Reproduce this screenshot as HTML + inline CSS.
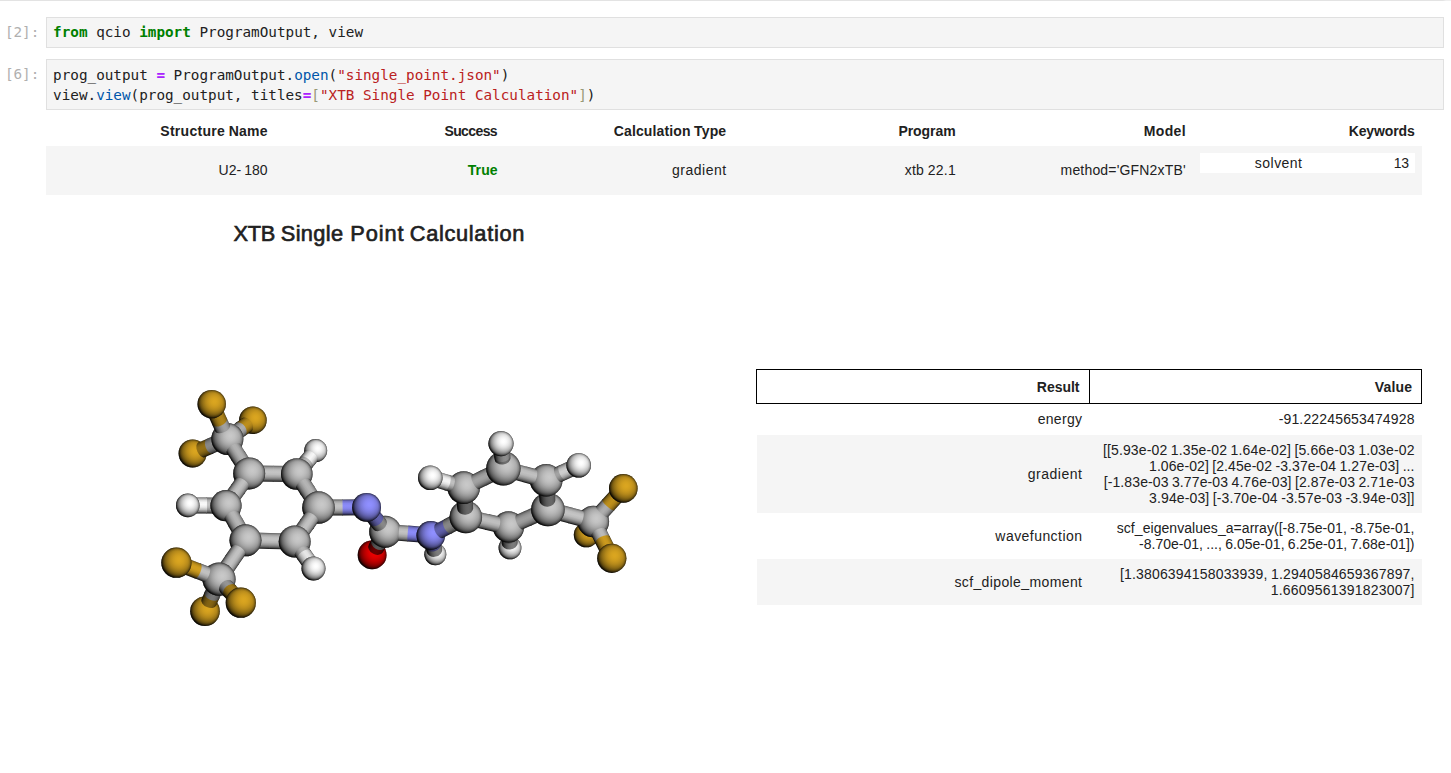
<!DOCTYPE html>
<html><head><meta charset="utf-8"><title>notebook</title>
<style>
html,body{margin:0;padding:0;background:#fff;}
body{width:1451px;height:773px;position:relative;overflow:hidden;font-family:"Liberation Sans","DejaVu Sans",sans-serif;color:#212121;font-size:14px;word-spacing:-0.6px;}
.abs{position:absolute;}
.topbar{left:0;top:0;width:1451px;height:1px;background:linear-gradient(to right,#e3e3e3 0,#e3e3e3 1443px,#efefef 1446px);}
.prompt{word-spacing:0;opacity:1;font-family:"DejaVu Sans Mono","Liberation Mono",monospace;font-size:14.3px;color:#b0b0b0;left:4.9px;white-space:pre;line-height:19px;}
.codebox{left:46px;width:1396px;background:#f5f5f5;border:1px solid #e0e0e0;}
.code{word-spacing:0;font-family:"DejaVu Sans Mono","Liberation Mono",monospace;font-size:14.3px;line-height:20px;white-space:pre;left:53.1px;color:#212121;}
.k{color:#008000;font-weight:bold;}
.o{color:#aa22ff;font-weight:bold;}
.s{color:#ba2121;}
.p{color:#0055aa;}
.b{color:#999977;}
.t{white-space:nowrap;line-height:16px;}
.r{text-align:right;}
.bd{font-weight:bold;}
.row{background:#f5f5f5;}
/*LS*/
#h1{letter-spacing:0.282px;margin-right:-0.282px;}
#h2{letter-spacing:-0.600px;margin-right:0.600px;}
#h3{letter-spacing:0.132px;margin-right:-0.132px;}
#h4{letter-spacing:-0.040px;margin-right:0.040px;}
#h5{letter-spacing:0.349px;margin-right:-0.349px;}
#h6{letter-spacing:-0.115px;margin-right:0.115px;}
#d1{letter-spacing:-0.031px;margin-right:0.031px;}
#d2{letter-spacing:0.105px;margin-right:-0.105px;}
#d3{letter-spacing:0.501px;margin-right:-0.501px;}
#d4{letter-spacing:0.260px;margin-right:-0.260px;}
#d5{letter-spacing:0.172px;margin-right:-0.172px;}
#d6{letter-spacing:0.463px;margin-right:-0.463px;}
#d7{letter-spacing:-0.239px;margin-right:0.239px;}
#t1{letter-spacing:-0.202px;margin-right:0.202px;}
#t2{letter-spacing:0.334px;margin-right:-0.334px;}
#t3{letter-spacing:0.883px;margin-right:-0.883px;}
#t4{letter-spacing:0.669px;margin-right:-0.669px;}
#rh1{letter-spacing:-0.016px;margin-right:0.016px;}
#rh2{letter-spacing:0.181px;margin-right:-0.181px;}
#r1{letter-spacing:0.298px;margin-right:-0.298px;}
#r2{letter-spacing:0.538px;margin-right:-0.538px;}
#r3{letter-spacing:0.448px;margin-right:-0.448px;}
#r4{letter-spacing:0.388px;margin-right:-0.388px;}
#v1{letter-spacing:0.159px;margin-right:-0.159px;}
#v2_1{letter-spacing:0.138px;margin-right:-0.138px;display:inline-block;}
#v2_2{letter-spacing:0.076px;margin-right:-0.076px;display:inline-block;}
#v2_3{letter-spacing:0.105px;margin-right:-0.105px;display:inline-block;}
#v2_4{letter-spacing:0.119px;margin-right:-0.119px;display:inline-block;}
#v3_1{letter-spacing:0.049px;margin-right:-0.049px;display:inline-block;}
#v3_2{letter-spacing:0.018px;margin-right:-0.018px;display:inline-block;}
#v4_1{letter-spacing:0.183px;margin-right:-0.183px;display:inline-block;}
#v4_2{letter-spacing:0.197px;margin-right:-0.197px;display:inline-block;}
/*ENDLS*/
</style></head><body>
<div class="abs topbar"></div>

<div class="abs prompt" style="top:23px;" id="p1">[2]:</div>
<div class="abs codebox" style="top:17px;height:29px;"></div>
<div class="abs code" style="top:22.3px;" id="c1"><span class="k">from</span> qcio <span class="k">import</span> ProgramOutput, view</div>

<div class="abs prompt" style="top:65px;" id="p2">[6]:</div>
<div class="abs codebox" style="top:59px;height:49px;"></div>
<div class="abs code" style="top:65.2px;" id="c2">prog_output <span class="o">=</span> ProgramOutput.<span class="p">open</span>(<span class="s">"single_point.json"</span>)
view.<span class="p">view</span>(prog_output, titles<span class="o">=</span><span class="b">[</span><span class="s">"XTB Single Point Calculation"</span><span class="b">]</span>)</div>

<!-- summary table -->
<div class="abs row" style="left:46px;top:146px;width:1376px;height:48.5px;"></div>
<div class="abs t bd" style="right:1183.4px;top:123px;" id="h1">Structure Name</div>
<div class="abs t bd" style="right:953.4px;top:123px;" id="h2">Success</div>
<div class="abs t bd" style="right:724.9px;top:123px;" id="h3">Calculation Type</div>
<div class="abs t bd" style="right:495.3px;top:123px;" id="h4">Program</div>
<div class="abs t bd" style="right:265.4px;top:123px;" id="h5">Model</div>
<div class="abs t bd" style="right:36.2px;top:123px;" id="h6">Keywords</div>

<div class="abs t" style="right:1183.4px;top:162px;" id="d1">U2- 180</div>
<div class="abs t bd" style="right:953.4px;top:162px;color:#008000;" id="d2">True</div>
<div class="abs t" style="right:724.9px;top:162px;" id="d3">gradient</div>
<div class="abs t" style="right:495.3px;top:162px;" id="d4">xtb 22.1</div>
<div class="abs t" style="right:265.4px;top:162px;" id="d5">method='GFN2xTB'</div>
<div class="abs" style="left:1200px;top:153px;width:215px;height:20px;background:#fff;"></div>
<div class="abs t" style="right:149px;top:155px;" id="d6">solvent</div>
<div class="abs t" style="right:42px;top:155px;" id="d7">13</div>

<!-- title -->
<div class="abs t" style="left:233.4px;top:220.8px;font-size:21.8px;line-height:26px;-webkit-text-stroke:0.65px #212121;width:300px;height:26px;" id="title"><span class="abs" id="t1" style="left:0px">XTB</span> <span class="abs" id="t2" style="left:47.4px">Single</span> <span class="abs" id="t3" style="left:116.9px">Point</span> <span class="abs" id="t4" style="left:176.4px">Calculation</span></div>

<svg class="abs" style="left:0;top:0" width="1451" height="773" viewBox="0 0 1451 773"><defs><radialGradient id="gC" cx="0.596" cy="0.404" r="0.636"><stop offset="0.000" stop-color="#c8c8c8"/><stop offset="0.050" stop-color="#c8c8c8"/><stop offset="0.100" stop-color="#c6c6c6"/><stop offset="0.150" stop-color="#c4c4c4"/><stop offset="0.200" stop-color="#c2c2c2"/><stop offset="0.250" stop-color="#bebebe"/><stop offset="0.300" stop-color="#bababa"/><stop offset="0.350" stop-color="#b5b5b5"/><stop offset="0.400" stop-color="#afafaf"/><stop offset="0.450" stop-color="#a9a9a9"/><stop offset="0.500" stop-color="#a1a1a1"/><stop offset="0.550" stop-color="#999999"/><stop offset="0.600" stop-color="#8f8f8f"/><stop offset="0.650" stop-color="#858585"/><stop offset="0.700" stop-color="#797979"/><stop offset="0.750" stop-color="#6b6b6b"/><stop offset="0.800" stop-color="#5c5c5c"/><stop offset="0.850" stop-color="#4a4a4a"/><stop offset="0.900" stop-color="#353535"/><stop offset="0.950" stop-color="#181818"/><stop offset="1.000" stop-color="#080808"/></radialGradient><radialGradient id="gH" cx="0.596" cy="0.404" r="0.636"><stop offset="0.000" stop-color="#ffffff"/><stop offset="0.050" stop-color="#fefefe"/><stop offset="0.100" stop-color="#fdfdfd"/><stop offset="0.150" stop-color="#fafafa"/><stop offset="0.200" stop-color="#f7f7f7"/><stop offset="0.250" stop-color="#f2f2f2"/><stop offset="0.300" stop-color="#ededed"/><stop offset="0.350" stop-color="#e7e7e7"/><stop offset="0.400" stop-color="#dfdfdf"/><stop offset="0.450" stop-color="#d7d7d7"/><stop offset="0.500" stop-color="#cdcdcd"/><stop offset="0.550" stop-color="#c3c3c3"/><stop offset="0.600" stop-color="#b7b7b7"/><stop offset="0.650" stop-color="#a9a9a9"/><stop offset="0.700" stop-color="#9a9a9a"/><stop offset="0.750" stop-color="#898989"/><stop offset="0.800" stop-color="#767676"/><stop offset="0.850" stop-color="#5f5f5f"/><stop offset="0.900" stop-color="#434343"/><stop offset="0.950" stop-color="#1e1e1e"/><stop offset="1.000" stop-color="#0a0a0a"/></radialGradient><radialGradient id="gF" cx="0.596" cy="0.404" r="0.636"><stop offset="0.000" stop-color="#daa520"/><stop offset="0.050" stop-color="#daa520"/><stop offset="0.100" stop-color="#d8a420"/><stop offset="0.150" stop-color="#d6a21f"/><stop offset="0.200" stop-color="#d3a01f"/><stop offset="0.250" stop-color="#cf9d1e"/><stop offset="0.300" stop-color="#cb991e"/><stop offset="0.350" stop-color="#c5951d"/><stop offset="0.400" stop-color="#bf901c"/><stop offset="0.450" stop-color="#b88b1b"/><stop offset="0.500" stop-color="#b0851a"/><stop offset="0.550" stop-color="#a67e18"/><stop offset="0.600" stop-color="#9c7617"/><stop offset="0.650" stop-color="#916e15"/><stop offset="0.700" stop-color="#846413"/><stop offset="0.750" stop-color="#755911"/><stop offset="0.800" stop-color="#644c0f"/><stop offset="0.850" stop-color="#513d0c"/><stop offset="0.900" stop-color="#392b08"/><stop offset="0.950" stop-color="#1a1404"/><stop offset="1.000" stop-color="#090701"/></radialGradient><radialGradient id="gN" cx="0.596" cy="0.404" r="0.636"><stop offset="0.000" stop-color="#8f8fff"/><stop offset="0.050" stop-color="#8f8ffe"/><stop offset="0.100" stop-color="#8e8efd"/><stop offset="0.150" stop-color="#8c8cfa"/><stop offset="0.200" stop-color="#8a8af7"/><stop offset="0.250" stop-color="#8888f2"/><stop offset="0.300" stop-color="#8585ed"/><stop offset="0.350" stop-color="#8181e7"/><stop offset="0.400" stop-color="#7d7ddf"/><stop offset="0.450" stop-color="#7979d7"/><stop offset="0.500" stop-color="#7373cd"/><stop offset="0.550" stop-color="#6d6dc3"/><stop offset="0.600" stop-color="#6666b7"/><stop offset="0.650" stop-color="#5f5fa9"/><stop offset="0.700" stop-color="#56569a"/><stop offset="0.750" stop-color="#4d4d89"/><stop offset="0.800" stop-color="#424276"/><stop offset="0.850" stop-color="#35355f"/><stop offset="0.900" stop-color="#262643"/><stop offset="0.950" stop-color="#11111e"/><stop offset="1.000" stop-color="#06060a"/></radialGradient><radialGradient id="gO" cx="0.596" cy="0.404" r="0.636"><stop offset="0.000" stop-color="#f00000"/><stop offset="0.050" stop-color="#f00000"/><stop offset="0.100" stop-color="#ee0000"/><stop offset="0.150" stop-color="#ec0000"/><stop offset="0.200" stop-color="#e80000"/><stop offset="0.250" stop-color="#e40000"/><stop offset="0.300" stop-color="#df0000"/><stop offset="0.350" stop-color="#d90000"/><stop offset="0.400" stop-color="#d20000"/><stop offset="0.450" stop-color="#ca0000"/><stop offset="0.500" stop-color="#c10000"/><stop offset="0.550" stop-color="#b70000"/><stop offset="0.600" stop-color="#ac0000"/><stop offset="0.650" stop-color="#9f0000"/><stop offset="0.700" stop-color="#910000"/><stop offset="0.750" stop-color="#810000"/><stop offset="0.800" stop-color="#6f0000"/><stop offset="0.850" stop-color="#590000"/><stop offset="0.900" stop-color="#3f0000"/><stop offset="0.950" stop-color="#1d0000"/><stop offset="1.000" stop-color="#0a0000"/></radialGradient><radialGradient id="rim" cx="0.5" cy="0.5" r="0.5"><stop offset="0.78" stop-color="#000" stop-opacity="0"/><stop offset="0.88" stop-color="#000" stop-opacity="0.1"/><stop offset="0.94" stop-color="#000" stop-opacity="0.28"/><stop offset="0.98" stop-color="#000" stop-opacity="0.5"/><stop offset="1" stop-color="#000" stop-opacity="0.7"/></radialGradient><linearGradient id="s1" x1="0" y1="0" x2="0" y2="1"><stop offset="0.000" stop-color="#2d2d2d"/><stop offset="0.040" stop-color="#737373"/><stop offset="0.125" stop-color="#9e9e9e"/><stop offset="0.250" stop-color="#bbbbbb"/><stop offset="0.400" stop-color="#c5c5c5"/><stop offset="0.550" stop-color="#bcbcbc"/><stop offset="0.700" stop-color="#a2a2a2"/><stop offset="0.825" stop-color="#7c7c7c"/><stop offset="0.925" stop-color="#4a4a4a"/><stop offset="0.975" stop-color="#1e1e1e"/><stop offset="1.000" stop-color="#080808"/></linearGradient><linearGradient id="s2" x1="0" y1="0" x2="0" y2="1"><stop offset="0.000" stop-color="#3b3b3b"/><stop offset="0.040" stop-color="#787878"/><stop offset="0.125" stop-color="#9c9c9c"/><stop offset="0.250" stop-color="#b2b2b2"/><stop offset="0.400" stop-color="#b5b5b5"/><stop offset="0.550" stop-color="#a8a8a8"/><stop offset="0.700" stop-color="#8c8c8c"/><stop offset="0.825" stop-color="#656565"/><stop offset="0.925" stop-color="#343434"/><stop offset="0.975" stop-color="#0b0b0b"/><stop offset="1.000" stop-color="#080808"/></linearGradient><linearGradient id="s3" x1="0" y1="0" x2="0" y2="1"><stop offset="0.000" stop-color="#111111"/><stop offset="0.040" stop-color="#5a5a5a"/><stop offset="0.125" stop-color="#8a8a8a"/><stop offset="0.250" stop-color="#aeaeae"/><stop offset="0.400" stop-color="#c1c1c1"/><stop offset="0.550" stop-color="#c1c1c1"/><stop offset="0.700" stop-color="#b0b0b0"/><stop offset="0.825" stop-color="#909090"/><stop offset="0.925" stop-color="#636363"/><stop offset="0.975" stop-color="#3a3a3a"/><stop offset="1.000" stop-color="#080808"/></linearGradient><linearGradient id="s4" x1="0" y1="0" x2="0" y2="1"><stop offset="0.000" stop-color="#080808"/><stop offset="0.040" stop-color="#2e2e2e"/><stop offset="0.125" stop-color="#666666"/><stop offset="0.250" stop-color="#959595"/><stop offset="0.400" stop-color="#b5b5b5"/><stop offset="0.550" stop-color="#c4c4c4"/><stop offset="0.700" stop-color="#c0c0c0"/><stop offset="0.825" stop-color="#adadad"/><stop offset="0.925" stop-color="#8a8a8a"/><stop offset="0.975" stop-color="#666666"/><stop offset="1.000" stop-color="#2e2e2e"/></linearGradient><linearGradient id="s5" x1="0" y1="0" x2="0" y2="1"><stop offset="0.000" stop-color="#080808"/><stop offset="0.040" stop-color="#1b1b1b"/><stop offset="0.125" stop-color="#515151"/><stop offset="0.250" stop-color="#808080"/><stop offset="0.400" stop-color="#a2a2a2"/><stop offset="0.550" stop-color="#b4b4b4"/><stop offset="0.700" stop-color="#b6b6b6"/><stop offset="0.825" stop-color="#a8a8a8"/><stop offset="0.925" stop-color="#8b8b8b"/><stop offset="0.975" stop-color="#6c6c6c"/><stop offset="1.000" stop-color="#3a3a3a"/></linearGradient><linearGradient id="s6" x1="0" y1="0" x2="0" y2="1"><stop offset="0.000" stop-color="#080808"/><stop offset="0.040" stop-color="#494949"/><stop offset="0.125" stop-color="#7d7d7d"/><stop offset="0.250" stop-color="#a5a5a5"/><stop offset="0.400" stop-color="#bdbdbd"/><stop offset="0.550" stop-color="#c2c2c2"/><stop offset="0.700" stop-color="#b6b6b6"/><stop offset="0.825" stop-color="#9b9b9b"/><stop offset="0.925" stop-color="#717171"/><stop offset="0.975" stop-color="#4a4a4a"/><stop offset="1.000" stop-color="#101010"/></linearGradient><linearGradient id="s7" x1="0" y1="0" x2="0" y2="1"><stop offset="0.000" stop-color="#080808"/><stop offset="0.040" stop-color="#4c4c4c"/><stop offset="0.125" stop-color="#7f7f7f"/><stop offset="0.250" stop-color="#a6a6a6"/><stop offset="0.400" stop-color="#bdbdbd"/><stop offset="0.550" stop-color="#c1c1c1"/><stop offset="0.700" stop-color="#b5b5b5"/><stop offset="0.825" stop-color="#999999"/><stop offset="0.925" stop-color="#6f6f6f"/><stop offset="0.975" stop-color="#474747"/><stop offset="1.000" stop-color="#0e0e0e"/></linearGradient><linearGradient id="s8" x1="0" y1="0" x2="0" y2="1"><stop offset="0.000" stop-color="#0a0a0a"/><stop offset="0.040" stop-color="#616161"/><stop offset="0.125" stop-color="#a2a2a2"/><stop offset="0.250" stop-color="#d4d4d4"/><stop offset="0.400" stop-color="#f1f1f1"/><stop offset="0.550" stop-color="#f7f7f7"/><stop offset="0.700" stop-color="#e6e6e6"/><stop offset="0.825" stop-color="#c3c3c3"/><stop offset="0.925" stop-color="#8d8d8d"/><stop offset="0.975" stop-color="#5b5b5b"/><stop offset="1.000" stop-color="#111111"/></linearGradient><linearGradient id="s9" x1="0" y1="0" x2="0" y2="1"><stop offset="0.000" stop-color="#3b3b3b"/><stop offset="0.040" stop-color="#797979"/><stop offset="0.125" stop-color="#9d9d9d"/><stop offset="0.250" stop-color="#b2b2b2"/><stop offset="0.400" stop-color="#b5b5b5"/><stop offset="0.550" stop-color="#a9a9a9"/><stop offset="0.700" stop-color="#8c8c8c"/><stop offset="0.825" stop-color="#656565"/><stop offset="0.925" stop-color="#343434"/><stop offset="0.975" stop-color="#0b0b0b"/><stop offset="1.000" stop-color="#080808"/></linearGradient><linearGradient id="s10" x1="0" y1="0" x2="0" y2="1"><stop offset="0.000" stop-color="#4c4c4c"/><stop offset="0.040" stop-color="#9a9a9a"/><stop offset="0.125" stop-color="#c8c8c8"/><stop offset="0.250" stop-color="#e3e3e3"/><stop offset="0.400" stop-color="#e7e7e7"/><stop offset="0.550" stop-color="#d7d7d7"/><stop offset="0.700" stop-color="#b3b3b3"/><stop offset="0.825" stop-color="#818181"/><stop offset="0.925" stop-color="#424242"/><stop offset="0.975" stop-color="#0e0e0e"/><stop offset="1.000" stop-color="#0a0a0a"/></linearGradient><linearGradient id="s11" x1="0" y1="0" x2="0" y2="1"><stop offset="0.000" stop-color="#080808"/><stop offset="0.040" stop-color="#2e2e2e"/><stop offset="0.125" stop-color="#666666"/><stop offset="0.250" stop-color="#959595"/><stop offset="0.400" stop-color="#b6b6b6"/><stop offset="0.550" stop-color="#c4c4c4"/><stop offset="0.700" stop-color="#c0c0c0"/><stop offset="0.825" stop-color="#adadad"/><stop offset="0.925" stop-color="#898989"/><stop offset="0.975" stop-color="#656565"/><stop offset="1.000" stop-color="#2d2d2d"/></linearGradient><linearGradient id="s12" x1="0" y1="0" x2="0" y2="1"><stop offset="0.000" stop-color="#0a0a0a"/><stop offset="0.040" stop-color="#3b3b3b"/><stop offset="0.125" stop-color="#828282"/><stop offset="0.250" stop-color="#bebebe"/><stop offset="0.400" stop-color="#e8e8e8"/><stop offset="0.550" stop-color="#f9f9f9"/><stop offset="0.700" stop-color="#f5f5f5"/><stop offset="0.825" stop-color="#dcdcdc"/><stop offset="0.925" stop-color="#afafaf"/><stop offset="0.975" stop-color="#818181"/><stop offset="1.000" stop-color="#3a3a3a"/></linearGradient><linearGradient id="s13" x1="0" y1="0" x2="0" y2="1"><stop offset="0.000" stop-color="#080808"/><stop offset="0.040" stop-color="#191919"/><stop offset="0.125" stop-color="#4e4e4e"/><stop offset="0.250" stop-color="#7c7c7c"/><stop offset="0.400" stop-color="#9e9e9e"/><stop offset="0.550" stop-color="#b0b0b0"/><stop offset="0.700" stop-color="#b2b2b2"/><stop offset="0.825" stop-color="#a6a6a6"/><stop offset="0.925" stop-color="#8a8a8a"/><stop offset="0.975" stop-color="#6c6c6c"/><stop offset="1.000" stop-color="#3b3b3b"/></linearGradient><linearGradient id="s14" x1="0" y1="0" x2="0" y2="1"><stop offset="0.000" stop-color="#080808"/><stop offset="0.040" stop-color="#141414"/><stop offset="0.125" stop-color="#444444"/><stop offset="0.250" stop-color="#6e6e6e"/><stop offset="0.400" stop-color="#8e8e8e"/><stop offset="0.550" stop-color="#9f9f9f"/><stop offset="0.700" stop-color="#a2a2a2"/><stop offset="0.825" stop-color="#979797"/><stop offset="0.925" stop-color="#7f7f7f"/><stop offset="0.975" stop-color="#646464"/><stop offset="1.000" stop-color="#393939"/></linearGradient><linearGradient id="s15" x1="0" y1="0" x2="0" y2="1"><stop offset="0.000" stop-color="#090701"/><stop offset="0.040" stop-color="#161103"/><stop offset="0.125" stop-color="#4a380b"/><stop offset="0.250" stop-color="#785b12"/><stop offset="0.400" stop-color="#9a7517"/><stop offset="0.550" stop-color="#ad8319"/><stop offset="0.700" stop-color="#b0851a"/><stop offset="0.825" stop-color="#a57d18"/><stop offset="0.925" stop-color="#8a6814"/><stop offset="0.975" stop-color="#6d5310"/><stop offset="1.000" stop-color="#3e2f09"/></linearGradient><linearGradient id="s16" x1="0" y1="0" x2="0" y2="1"><stop offset="0.000" stop-color="#101010"/><stop offset="0.040" stop-color="#515151"/><stop offset="0.125" stop-color="#7c7c7c"/><stop offset="0.250" stop-color="#9c9c9c"/><stop offset="0.400" stop-color="#acacac"/><stop offset="0.550" stop-color="#acacac"/><stop offset="0.700" stop-color="#9d9d9d"/><stop offset="0.825" stop-color="#818181"/><stop offset="0.925" stop-color="#595959"/><stop offset="0.975" stop-color="#343434"/><stop offset="1.000" stop-color="#080808"/></linearGradient><linearGradient id="s17" x1="0" y1="0" x2="0" y2="1"><stop offset="0.000" stop-color="#120d03"/><stop offset="0.040" stop-color="#58420d"/><stop offset="0.125" stop-color="#876614"/><stop offset="0.250" stop-color="#aa8119"/><stop offset="0.400" stop-color="#bc8e1c"/><stop offset="0.550" stop-color="#bc8e1c"/><stop offset="0.700" stop-color="#ab8119"/><stop offset="0.825" stop-color="#8d6a15"/><stop offset="0.925" stop-color="#61490e"/><stop offset="0.975" stop-color="#392b08"/><stop offset="1.000" stop-color="#090701"/></linearGradient><linearGradient id="s18" x1="0" y1="0" x2="0" y2="1"><stop offset="0.000" stop-color="#080808"/><stop offset="0.040" stop-color="#282828"/><stop offset="0.125" stop-color="#4e4e4e"/><stop offset="0.250" stop-color="#6d6d6d"/><stop offset="0.400" stop-color="#818181"/><stop offset="0.550" stop-color="#898989"/><stop offset="0.700" stop-color="#858585"/><stop offset="0.825" stop-color="#767676"/><stop offset="0.925" stop-color="#5c5c5c"/><stop offset="0.975" stop-color="#434343"/><stop offset="1.000" stop-color="#1c1c1c"/></linearGradient><linearGradient id="s19" x1="0" y1="0" x2="0" y2="1"><stop offset="0.000" stop-color="#090701"/><stop offset="0.040" stop-color="#2b2106"/><stop offset="0.125" stop-color="#55400c"/><stop offset="0.250" stop-color="#765a11"/><stop offset="0.400" stop-color="#8d6a15"/><stop offset="0.550" stop-color="#957116"/><stop offset="0.700" stop-color="#916e15"/><stop offset="0.825" stop-color="#806113"/><stop offset="0.925" stop-color="#644c0f"/><stop offset="0.975" stop-color="#49370b"/><stop offset="1.000" stop-color="#1e1704"/></linearGradient><linearGradient id="s20" x1="0" y1="0" x2="0" y2="1"><stop offset="0.000" stop-color="#121212"/><stop offset="0.040" stop-color="#5a5a5a"/><stop offset="0.125" stop-color="#8b8b8b"/><stop offset="0.250" stop-color="#afafaf"/><stop offset="0.400" stop-color="#c1c1c1"/><stop offset="0.550" stop-color="#c1c1c1"/><stop offset="0.700" stop-color="#b0b0b0"/><stop offset="0.825" stop-color="#909090"/><stop offset="0.925" stop-color="#626262"/><stop offset="0.975" stop-color="#393939"/><stop offset="1.000" stop-color="#080808"/></linearGradient><linearGradient id="s21" x1="0" y1="0" x2="0" y2="1"><stop offset="0.000" stop-color="#080808"/><stop offset="0.040" stop-color="#222222"/><stop offset="0.125" stop-color="#5b5b5b"/><stop offset="0.250" stop-color="#8c8c8c"/><stop offset="0.400" stop-color="#aeaeae"/><stop offset="0.550" stop-color="#c0c0c0"/><stop offset="0.700" stop-color="#c0c0c0"/><stop offset="0.825" stop-color="#b0b0b0"/><stop offset="0.925" stop-color="#8f8f8f"/><stop offset="0.975" stop-color="#6e6e6e"/><stop offset="1.000" stop-color="#383838"/></linearGradient><linearGradient id="s22" x1="0" y1="0" x2="0" y2="1"><stop offset="0.000" stop-color="#090701"/><stop offset="0.040" stop-color="#261c06"/><stop offset="0.125" stop-color="#634b0f"/><stop offset="0.250" stop-color="#987316"/><stop offset="0.400" stop-color="#be901c"/><stop offset="0.550" stop-color="#d19e1f"/><stop offset="0.700" stop-color="#d19e1f"/><stop offset="0.825" stop-color="#bf911c"/><stop offset="0.925" stop-color="#9c7617"/><stop offset="0.975" stop-color="#775a12"/><stop offset="1.000" stop-color="#3d2e09"/></linearGradient><linearGradient id="s23" x1="0" y1="0" x2="0" y2="1"><stop offset="0.000" stop-color="#1b1b1b"/><stop offset="0.040" stop-color="#454545"/><stop offset="0.125" stop-color="#606060"/><stop offset="0.250" stop-color="#727272"/><stop offset="0.400" stop-color="#797979"/><stop offset="0.550" stop-color="#757575"/><stop offset="0.700" stop-color="#676767"/><stop offset="0.825" stop-color="#515151"/><stop offset="0.925" stop-color="#333333"/><stop offset="0.975" stop-color="#191919"/><stop offset="1.000" stop-color="#080808"/></linearGradient><linearGradient id="s24" x1="0" y1="0" x2="0" y2="1"><stop offset="0.000" stop-color="#1d1604"/><stop offset="0.040" stop-color="#4c390b"/><stop offset="0.125" stop-color="#694f0f"/><stop offset="0.250" stop-color="#7d5e12"/><stop offset="0.400" stop-color="#846413"/><stop offset="0.550" stop-color="#806113"/><stop offset="0.700" stop-color="#705510"/><stop offset="0.825" stop-color="#58430d"/><stop offset="0.925" stop-color="#372a08"/><stop offset="0.975" stop-color="#1b1404"/><stop offset="1.000" stop-color="#090701"/></linearGradient><linearGradient id="s25" x1="0" y1="0" x2="0" y2="1"><stop offset="0.000" stop-color="#3c3c3c"/><stop offset="0.040" stop-color="#6c6c6c"/><stop offset="0.125" stop-color="#878787"/><stop offset="0.250" stop-color="#959595"/><stop offset="0.400" stop-color="#949494"/><stop offset="0.550" stop-color="#868686"/><stop offset="0.700" stop-color="#6c6c6c"/><stop offset="0.825" stop-color="#4b4b4b"/><stop offset="0.925" stop-color="#212121"/><stop offset="0.975" stop-color="#080808"/><stop offset="1.000" stop-color="#080808"/></linearGradient><linearGradient id="s26" x1="0" y1="0" x2="0" y2="1"><stop offset="0.000" stop-color="#42320a"/><stop offset="0.040" stop-color="#765911"/><stop offset="0.125" stop-color="#936f16"/><stop offset="0.250" stop-color="#a27b18"/><stop offset="0.400" stop-color="#a17a18"/><stop offset="0.550" stop-color="#936f16"/><stop offset="0.700" stop-color="#765911"/><stop offset="0.825" stop-color="#513e0c"/><stop offset="0.925" stop-color="#241b05"/><stop offset="0.975" stop-color="#090701"/><stop offset="1.000" stop-color="#090701"/></linearGradient><linearGradient id="s27" x1="0" y1="0" x2="0" y2="1"><stop offset="0.000" stop-color="#2d2d2d"/><stop offset="0.040" stop-color="#727272"/><stop offset="0.125" stop-color="#9e9e9e"/><stop offset="0.250" stop-color="#bababa"/><stop offset="0.400" stop-color="#c4c4c4"/><stop offset="0.550" stop-color="#bcbcbc"/><stop offset="0.700" stop-color="#a3a3a3"/><stop offset="0.825" stop-color="#7c7c7c"/><stop offset="0.925" stop-color="#4a4a4a"/><stop offset="0.975" stop-color="#1f1f1f"/><stop offset="1.000" stop-color="#080808"/></linearGradient><linearGradient id="s28" x1="0" y1="0" x2="0" y2="1"><stop offset="0.000" stop-color="#202039"/><stop offset="0.040" stop-color="#525292"/><stop offset="0.125" stop-color="#7171c9"/><stop offset="0.250" stop-color="#8585ee"/><stop offset="0.400" stop-color="#8c8cfa"/><stop offset="0.550" stop-color="#8787f0"/><stop offset="0.700" stop-color="#7474cf"/><stop offset="0.825" stop-color="#59599f"/><stop offset="0.925" stop-color="#35355e"/><stop offset="0.975" stop-color="#161627"/><stop offset="1.000" stop-color="#06060a"/></linearGradient><linearGradient id="s29" x1="0" y1="0" x2="0" y2="1"><stop offset="0.000" stop-color="#2b2b4c"/><stop offset="0.040" stop-color="#494982"/><stop offset="0.125" stop-color="#5a5aa0"/><stop offset="0.250" stop-color="#6262ae"/><stop offset="0.400" stop-color="#6060ac"/><stop offset="0.550" stop-color="#56569a"/><stop offset="0.700" stop-color="#45457a"/><stop offset="0.825" stop-color="#2e2e52"/><stop offset="0.925" stop-color="#131322"/><stop offset="0.975" stop-color="#06060a"/><stop offset="1.000" stop-color="#06060a"/></linearGradient><linearGradient id="s30" x1="0" y1="0" x2="0" y2="1"><stop offset="0.000" stop-color="#3c3c3c"/><stop offset="0.040" stop-color="#666666"/><stop offset="0.125" stop-color="#7d7d7d"/><stop offset="0.250" stop-color="#898989"/><stop offset="0.400" stop-color="#878787"/><stop offset="0.550" stop-color="#797979"/><stop offset="0.700" stop-color="#606060"/><stop offset="0.825" stop-color="#414141"/><stop offset="0.925" stop-color="#1b1b1b"/><stop offset="0.975" stop-color="#080808"/><stop offset="1.000" stop-color="#080808"/></linearGradient><linearGradient id="s31" x1="0" y1="0" x2="0" y2="1"><stop offset="0.000" stop-color="#161616"/><stop offset="0.040" stop-color="#343434"/><stop offset="0.125" stop-color="#474747"/><stop offset="0.250" stop-color="#545454"/><stop offset="0.400" stop-color="#585858"/><stop offset="0.550" stop-color="#555555"/><stop offset="0.700" stop-color="#4b4b4b"/><stop offset="0.825" stop-color="#3b3b3b"/><stop offset="0.925" stop-color="#262626"/><stop offset="0.975" stop-color="#141414"/><stop offset="1.000" stop-color="#080808"/></linearGradient><linearGradient id="s32" x1="0" y1="0" x2="0" y2="1"><stop offset="0.000" stop-color="#1a0000"/><stop offset="0.040" stop-color="#3e0000"/><stop offset="0.125" stop-color="#550000"/><stop offset="0.250" stop-color="#640000"/><stop offset="0.400" stop-color="#6a0000"/><stop offset="0.550" stop-color="#670000"/><stop offset="0.700" stop-color="#5a0000"/><stop offset="0.825" stop-color="#470000"/><stop offset="0.925" stop-color="#2d0000"/><stop offset="0.975" stop-color="#170000"/><stop offset="1.000" stop-color="#0a0000"/></linearGradient><linearGradient id="s33" x1="0" y1="0" x2="0" y2="1"><stop offset="0.000" stop-color="#303030"/><stop offset="0.040" stop-color="#747474"/><stop offset="0.125" stop-color="#9f9f9f"/><stop offset="0.250" stop-color="#bababa"/><stop offset="0.400" stop-color="#c3c3c3"/><stop offset="0.550" stop-color="#bababa"/><stop offset="0.700" stop-color="#a0a0a0"/><stop offset="0.825" stop-color="#797979"/><stop offset="0.925" stop-color="#474747"/><stop offset="0.975" stop-color="#1b1b1b"/><stop offset="1.000" stop-color="#080808"/></linearGradient><linearGradient id="s34" x1="0" y1="0" x2="0" y2="1"><stop offset="0.000" stop-color="#22223d"/><stop offset="0.040" stop-color="#535394"/><stop offset="0.125" stop-color="#7272cb"/><stop offset="0.250" stop-color="#8585ee"/><stop offset="0.400" stop-color="#8c8cf9"/><stop offset="0.550" stop-color="#8585ed"/><stop offset="0.700" stop-color="#7272cc"/><stop offset="0.825" stop-color="#57579b"/><stop offset="0.925" stop-color="#33335a"/><stop offset="0.975" stop-color="#141423"/><stop offset="1.000" stop-color="#06060a"/></linearGradient><linearGradient id="s35" x1="0" y1="0" x2="0" y2="1"><stop offset="0.000" stop-color="#262643"/><stop offset="0.040" stop-color="#393966"/><stop offset="0.125" stop-color="#434378"/><stop offset="0.250" stop-color="#47477f"/><stop offset="0.400" stop-color="#444479"/><stop offset="0.550" stop-color="#3b3b6a"/><stop offset="0.700" stop-color="#2d2d51"/><stop offset="0.825" stop-color="#1c1c33"/><stop offset="0.925" stop-color="#09090f"/><stop offset="0.975" stop-color="#06060a"/><stop offset="1.000" stop-color="#06060a"/></linearGradient><linearGradient id="s36" x1="0" y1="0" x2="0" y2="1"><stop offset="0.000" stop-color="#434343"/><stop offset="0.040" stop-color="#666666"/><stop offset="0.125" stop-color="#787878"/><stop offset="0.250" stop-color="#7f7f7f"/><stop offset="0.400" stop-color="#797979"/><stop offset="0.550" stop-color="#6a6a6a"/><stop offset="0.700" stop-color="#515151"/><stop offset="0.825" stop-color="#333333"/><stop offset="0.925" stop-color="#0f0f0f"/><stop offset="0.975" stop-color="#0a0a0a"/><stop offset="1.000" stop-color="#0a0a0a"/></linearGradient><linearGradient id="s37" x1="0" y1="0" x2="0" y2="1"><stop offset="0.000" stop-color="#11111e"/><stop offset="0.040" stop-color="#34345c"/><stop offset="0.125" stop-color="#4a4a84"/><stop offset="0.250" stop-color="#5a5aa0"/><stop offset="0.400" stop-color="#6161ad"/><stop offset="0.550" stop-color="#5f5fa9"/><stop offset="0.700" stop-color="#545497"/><stop offset="0.825" stop-color="#434378"/><stop offset="0.925" stop-color="#2c2c4f"/><stop offset="0.975" stop-color="#18182a"/><stop offset="1.000" stop-color="#06060a"/></linearGradient><linearGradient id="s38" x1="0" y1="0" x2="0" y2="1"><stop offset="0.000" stop-color="#181818"/><stop offset="0.040" stop-color="#484848"/><stop offset="0.125" stop-color="#686868"/><stop offset="0.250" stop-color="#7e7e7e"/><stop offset="0.400" stop-color="#878787"/><stop offset="0.550" stop-color="#858585"/><stop offset="0.700" stop-color="#767676"/><stop offset="0.825" stop-color="#5e5e5e"/><stop offset="0.925" stop-color="#3e3e3e"/><stop offset="0.975" stop-color="#212121"/><stop offset="1.000" stop-color="#080808"/></linearGradient><linearGradient id="s39" x1="0" y1="0" x2="0" y2="1"><stop offset="0.000" stop-color="#080808"/><stop offset="0.040" stop-color="#080808"/><stop offset="0.125" stop-color="#232323"/><stop offset="0.250" stop-color="#3f3f3f"/><stop offset="0.400" stop-color="#555555"/><stop offset="0.550" stop-color="#626262"/><stop offset="0.700" stop-color="#676767"/><stop offset="0.825" stop-color="#636363"/><stop offset="0.925" stop-color="#575757"/><stop offset="0.975" stop-color="#484848"/><stop offset="1.000" stop-color="#2f2f2f"/></linearGradient><linearGradient id="s40" x1="0" y1="0" x2="0" y2="1"><stop offset="0.000" stop-color="#191919"/><stop offset="0.040" stop-color="#545454"/><stop offset="0.125" stop-color="#7b7b7b"/><stop offset="0.250" stop-color="#979797"/><stop offset="0.400" stop-color="#a3a3a3"/><stop offset="0.550" stop-color="#a0a0a0"/><stop offset="0.700" stop-color="#8f8f8f"/><stop offset="0.825" stop-color="#727272"/><stop offset="0.925" stop-color="#4b4b4b"/><stop offset="0.975" stop-color="#282828"/><stop offset="1.000" stop-color="#080808"/></linearGradient><linearGradient id="s41" x1="0" y1="0" x2="0" y2="1"><stop offset="0.000" stop-color="#363636"/><stop offset="0.040" stop-color="#787878"/><stop offset="0.125" stop-color="#a1a1a1"/><stop offset="0.250" stop-color="#bbbbbb"/><stop offset="0.400" stop-color="#c1c1c1"/><stop offset="0.550" stop-color="#b7b7b7"/><stop offset="0.700" stop-color="#9b9b9b"/><stop offset="0.825" stop-color="#737373"/><stop offset="0.925" stop-color="#404040"/><stop offset="0.975" stop-color="#151515"/><stop offset="1.000" stop-color="#080808"/></linearGradient><linearGradient id="s42" x1="0" y1="0" x2="0" y2="1"><stop offset="0.000" stop-color="#2f2f2f"/><stop offset="0.040" stop-color="#4e4e4e"/><stop offset="0.125" stop-color="#5f5f5f"/><stop offset="0.250" stop-color="#676767"/><stop offset="0.400" stop-color="#656565"/><stop offset="0.550" stop-color="#5b5b5b"/><stop offset="0.700" stop-color="#484848"/><stop offset="0.825" stop-color="#313131"/><stop offset="0.925" stop-color="#151515"/><stop offset="0.975" stop-color="#080808"/><stop offset="1.000" stop-color="#080808"/></linearGradient><linearGradient id="s43" x1="0" y1="0" x2="0" y2="1"><stop offset="0.000" stop-color="#080808"/><stop offset="0.040" stop-color="#313131"/><stop offset="0.125" stop-color="#5d5d5d"/><stop offset="0.250" stop-color="#808080"/><stop offset="0.400" stop-color="#979797"/><stop offset="0.550" stop-color="#9f9f9f"/><stop offset="0.700" stop-color="#989898"/><stop offset="0.825" stop-color="#868686"/><stop offset="0.925" stop-color="#676767"/><stop offset="0.975" stop-color="#494949"/><stop offset="1.000" stop-color="#1b1b1b"/></linearGradient><linearGradient id="s44" x1="0" y1="0" x2="0" y2="1"><stop offset="0.000" stop-color="#080808"/><stop offset="0.040" stop-color="#262626"/><stop offset="0.125" stop-color="#5e5e5e"/><stop offset="0.250" stop-color="#8d8d8d"/><stop offset="0.400" stop-color="#afafaf"/><stop offset="0.550" stop-color="#bfbfbf"/><stop offset="0.700" stop-color="#bebebe"/><stop offset="0.825" stop-color="#adadad"/><stop offset="0.925" stop-color="#8c8c8c"/><stop offset="0.975" stop-color="#6a6a6a"/><stop offset="1.000" stop-color="#343434"/></linearGradient><linearGradient id="s45" x1="0" y1="0" x2="0" y2="1"><stop offset="0.000" stop-color="#080808"/><stop offset="0.040" stop-color="#242424"/><stop offset="0.125" stop-color="#5c5c5c"/><stop offset="0.250" stop-color="#8d8d8d"/><stop offset="0.400" stop-color="#afafaf"/><stop offset="0.550" stop-color="#bfbfbf"/><stop offset="0.700" stop-color="#bfbfbf"/><stop offset="0.825" stop-color="#aeaeae"/><stop offset="0.925" stop-color="#8e8e8e"/><stop offset="0.975" stop-color="#6c6c6c"/><stop offset="1.000" stop-color="#363636"/></linearGradient><linearGradient id="s46" x1="0" y1="0" x2="0" y2="1"><stop offset="0.000" stop-color="#0a0a0a"/><stop offset="0.040" stop-color="#2e2e2e"/><stop offset="0.125" stop-color="#767676"/><stop offset="0.250" stop-color="#b3b3b3"/><stop offset="0.400" stop-color="#dfdfdf"/><stop offset="0.550" stop-color="#f4f4f4"/><stop offset="0.700" stop-color="#f3f3f3"/><stop offset="0.825" stop-color="#dedede"/><stop offset="0.925" stop-color="#b5b5b5"/><stop offset="0.975" stop-color="#898989"/><stop offset="1.000" stop-color="#454545"/></linearGradient><linearGradient id="s47" x1="0" y1="0" x2="0" y2="1"><stop offset="0.000" stop-color="#080808"/><stop offset="0.040" stop-color="#080808"/><stop offset="0.125" stop-color="#292929"/><stop offset="0.250" stop-color="#464646"/><stop offset="0.400" stop-color="#5d5d5d"/><stop offset="0.550" stop-color="#6b6b6b"/><stop offset="0.700" stop-color="#6f6f6f"/><stop offset="0.825" stop-color="#6b6b6b"/><stop offset="0.925" stop-color="#5c5c5c"/><stop offset="0.975" stop-color="#4c4c4c"/><stop offset="1.000" stop-color="#303030"/></linearGradient><linearGradient id="s48" x1="0" y1="0" x2="0" y2="1"><stop offset="0.000" stop-color="#0a0a0a"/><stop offset="0.040" stop-color="#0a0a0a"/><stop offset="0.125" stop-color="#343434"/><stop offset="0.250" stop-color="#5a5a5a"/><stop offset="0.400" stop-color="#777777"/><stop offset="0.550" stop-color="#888888"/><stop offset="0.700" stop-color="#8e8e8e"/><stop offset="0.825" stop-color="#888888"/><stop offset="0.925" stop-color="#767676"/><stop offset="0.975" stop-color="#616161"/><stop offset="1.000" stop-color="#3e3e3e"/></linearGradient><linearGradient id="s49" x1="0" y1="0" x2="0" y2="1"><stop offset="0.000" stop-color="#1a1a1a"/><stop offset="0.040" stop-color="#555555"/><stop offset="0.125" stop-color="#7b7b7b"/><stop offset="0.250" stop-color="#979797"/><stop offset="0.400" stop-color="#a3a3a3"/><stop offset="0.550" stop-color="#a0a0a0"/><stop offset="0.700" stop-color="#8e8e8e"/><stop offset="0.825" stop-color="#727272"/><stop offset="0.925" stop-color="#4a4a4a"/><stop offset="0.975" stop-color="#272727"/><stop offset="1.000" stop-color="#080808"/></linearGradient><linearGradient id="s50" x1="0" y1="0" x2="0" y2="1"><stop offset="0.000" stop-color="#212121"/><stop offset="0.040" stop-color="#6c6c6c"/><stop offset="0.125" stop-color="#9d9d9d"/><stop offset="0.250" stop-color="#c0c0c0"/><stop offset="0.400" stop-color="#cfcfcf"/><stop offset="0.550" stop-color="#cccccc"/><stop offset="0.700" stop-color="#b5b5b5"/><stop offset="0.825" stop-color="#919191"/><stop offset="0.925" stop-color="#5e5e5e"/><stop offset="0.975" stop-color="#323232"/><stop offset="1.000" stop-color="#0a0a0a"/></linearGradient><linearGradient id="s51" x1="0" y1="0" x2="0" y2="1"><stop offset="0.000" stop-color="#2f2f2f"/><stop offset="0.040" stop-color="#4c4c4c"/><stop offset="0.125" stop-color="#5b5b5b"/><stop offset="0.250" stop-color="#626262"/><stop offset="0.400" stop-color="#5f5f5f"/><stop offset="0.550" stop-color="#545454"/><stop offset="0.700" stop-color="#424242"/><stop offset="0.825" stop-color="#2c2c2c"/><stop offset="0.925" stop-color="#111111"/><stop offset="0.975" stop-color="#080808"/><stop offset="1.000" stop-color="#080808"/></linearGradient><linearGradient id="s52" x1="0" y1="0" x2="0" y2="1"><stop offset="0.000" stop-color="#3d3d3d"/><stop offset="0.040" stop-color="#616161"/><stop offset="0.125" stop-color="#747474"/><stop offset="0.250" stop-color="#7d7d7d"/><stop offset="0.400" stop-color="#797979"/><stop offset="0.550" stop-color="#6c6c6c"/><stop offset="0.700" stop-color="#555555"/><stop offset="0.825" stop-color="#383838"/><stop offset="0.925" stop-color="#161616"/><stop offset="0.975" stop-color="#0a0a0a"/><stop offset="1.000" stop-color="#0a0a0a"/></linearGradient><linearGradient id="s53" x1="0" y1="0" x2="0" y2="1"><stop offset="0.000" stop-color="#353535"/><stop offset="0.040" stop-color="#7a7a7a"/><stop offset="0.125" stop-color="#a4a4a4"/><stop offset="0.250" stop-color="#bebebe"/><stop offset="0.400" stop-color="#c5c5c5"/><stop offset="0.550" stop-color="#bbbbbb"/><stop offset="0.700" stop-color="#9f9f9f"/><stop offset="0.825" stop-color="#767676"/><stop offset="0.925" stop-color="#434343"/><stop offset="0.975" stop-color="#171717"/><stop offset="1.000" stop-color="#080808"/></linearGradient><linearGradient id="s54" x1="0" y1="0" x2="0" y2="1"><stop offset="0.000" stop-color="#080808"/><stop offset="0.040" stop-color="#474747"/><stop offset="0.125" stop-color="#747474"/><stop offset="0.250" stop-color="#979797"/><stop offset="0.400" stop-color="#ababab"/><stop offset="0.550" stop-color="#aeaeae"/><stop offset="0.700" stop-color="#a2a2a2"/><stop offset="0.825" stop-color="#898989"/><stop offset="0.925" stop-color="#626262"/><stop offset="0.975" stop-color="#3f3f3f"/><stop offset="1.000" stop-color="#0b0b0b"/></linearGradient><linearGradient id="s55" x1="0" y1="0" x2="0" y2="1"><stop offset="0.000" stop-color="#090701"/><stop offset="0.040" stop-color="#4d3b0b"/><stop offset="0.125" stop-color="#7f6013"/><stop offset="0.250" stop-color="#a57d18"/><stop offset="0.400" stop-color="#ba8d1b"/><stop offset="0.550" stop-color="#be901c"/><stop offset="0.700" stop-color="#b1861a"/><stop offset="0.825" stop-color="#957116"/><stop offset="0.925" stop-color="#6b5110"/><stop offset="0.975" stop-color="#44340a"/><stop offset="1.000" stop-color="#0c0902"/></linearGradient><linearGradient id="s56" x1="0" y1="0" x2="0" y2="1"><stop offset="0.000" stop-color="#3a3a3a"/><stop offset="0.040" stop-color="#7a7a7a"/><stop offset="0.125" stop-color="#a0a0a0"/><stop offset="0.250" stop-color="#b7b7b7"/><stop offset="0.400" stop-color="#bcbcbc"/><stop offset="0.550" stop-color="#b0b0b0"/><stop offset="0.700" stop-color="#939393"/><stop offset="0.825" stop-color="#6c6c6c"/><stop offset="0.925" stop-color="#393939"/><stop offset="0.975" stop-color="#0f0f0f"/><stop offset="1.000" stop-color="#080808"/></linearGradient><linearGradient id="s57" x1="0" y1="0" x2="0" y2="1"><stop offset="0.000" stop-color="#3f3009"/><stop offset="0.040" stop-color="#856413"/><stop offset="0.125" stop-color="#ae841a"/><stop offset="0.250" stop-color="#c7971d"/><stop offset="0.400" stop-color="#cd9b1e"/><stop offset="0.550" stop-color="#bf911c"/><stop offset="0.700" stop-color="#a07918"/><stop offset="0.825" stop-color="#755911"/><stop offset="0.925" stop-color="#3e2f09"/><stop offset="0.975" stop-color="#100c02"/><stop offset="1.000" stop-color="#090701"/></linearGradient><linearGradient id="s58" x1="0" y1="0" x2="0" y2="1"><stop offset="0.000" stop-color="#171717"/><stop offset="0.040" stop-color="#1c1c1c"/><stop offset="0.125" stop-color="#1d1d1d"/><stop offset="0.250" stop-color="#1c1c1c"/><stop offset="0.400" stop-color="#191919"/><stop offset="0.550" stop-color="#141414"/><stop offset="0.700" stop-color="#0e0e0e"/><stop offset="0.825" stop-color="#080808"/><stop offset="0.925" stop-color="#080808"/><stop offset="0.975" stop-color="#080808"/><stop offset="1.000" stop-color="#080808"/></linearGradient><linearGradient id="s59" x1="0" y1="0" x2="0" y2="1"><stop offset="0.000" stop-color="#1a1304"/><stop offset="0.040" stop-color="#1e1704"/><stop offset="0.125" stop-color="#1f1805"/><stop offset="0.250" stop-color="#1e1704"/><stop offset="0.400" stop-color="#1b1404"/><stop offset="0.550" stop-color="#161103"/><stop offset="0.700" stop-color="#100c02"/><stop offset="0.825" stop-color="#090701"/><stop offset="0.925" stop-color="#090701"/><stop offset="0.975" stop-color="#090701"/><stop offset="1.000" stop-color="#090701"/></linearGradient></defs>
<circle cx="252.9" cy="420.3" r="13.8" fill="url(#gF)"/><circle cx="252.9" cy="420.3" r="13.8" fill="url(#rim)"/>
<circle cx="192.6" cy="453.5" r="14.0" fill="url(#gF)"/><circle cx="192.6" cy="453.5" r="14.0" fill="url(#rim)"/>
<g transform="translate(227.4 438.9) rotate(-36.11)"><path d="M15.38,-8.00 L23.70,-8.00 A5.72,8.00 0 0 1 23.70,8.00 L15.38,8.00 Z" fill="url(#s17)"/></g>
<g transform="translate(227.4 438.9) rotate(157.24)"><path d="M18.47,-8.00 L28.15,-8.00 A4.41,8.00 0 0 1 28.15,8.00 L18.47,8.00 Z" fill="url(#s19)"/></g>
<circle cx="372.1" cy="554.9" r="14.4" fill="url(#gO)"/><circle cx="372.1" cy="554.9" r="14.4" fill="url(#rim)"/>
<circle cx="586.3" cy="534.8" r="12.5" fill="url(#gF)"/><circle cx="586.3" cy="534.8" r="12.5" fill="url(#rim)"/>
<circle cx="435.3" cy="554.2" r="11.0" fill="url(#gH)"/><circle cx="435.3" cy="554.2" r="11.0" fill="url(#rim)"/>
<g transform="translate(385.2 531.8) rotate(119.56)"><path d="M12.88,-8.00 L18.91,-8.00 A6.16,8.00 0 0 1 18.91,8.00 L12.88,8.00 Z" fill="url(#s32)"/></g>
<g transform="translate(227.4 438.9) rotate(-36.11)"><path d="M0.00,-8.00 L15.78,-8.00 A5.72,8.00 0 0 1 15.78,8.00 L0.00,8.00 Z" fill="url(#s16)"/></g>
<circle cx="510.0" cy="547.9" r="11.4" fill="url(#gH)"/><circle cx="510.0" cy="547.9" r="11.4" fill="url(#rim)"/>
<g transform="translate(430.8 535.4) rotate(76.54)"><path d="M9.27,-8.00 L15.14,-8.00 A6.66,8.00 0 0 1 15.14,8.00 L9.27,8.00 Z" fill="url(#s36)"/></g>
<g transform="translate(227.4 438.9) rotate(157.24)"><path d="M0.00,-8.00 L18.87,-8.00 A4.41,8.00 0 0 1 18.87,8.00 L0.00,8.00 Z" fill="url(#s18)"/></g>
<g transform="translate(508.5 526.9) rotate(85.91)"><path d="M10.13,-8.00 L16.28,-8.00 A6.47,8.00 0 0 1 16.28,8.00 L10.13,8.00 Z" fill="url(#s52)"/></g>
<circle cx="227.4" cy="438.9" r="16.0" fill="url(#gC)"/><circle cx="227.4" cy="438.9" r="16.0" fill="url(#rim)"/>
<g transform="translate(385.2 531.8) rotate(119.56)"><path d="M0.00,-8.00 L13.28,-8.00 A6.16,8.00 0 0 1 13.28,8.00 L0.00,8.00 Z" fill="url(#s31)"/></g>
<g transform="translate(227.4 438.9) rotate(-114.28)"><path d="M11.72,-8.00 L19.49,-8.00 L19.49,8.00 L11.72,8.00 A4.27,8.00 0 0 1 11.72,-8.00 Z" fill="url(#s14)"/></g>
<g transform="translate(249.2 473.4) rotate(-122.29)"><path d="M20.01,-8.00 L28.98,-8.00 A4.17,8.00 0 0 1 28.98,8.00 L20.01,8.00 Z" fill="url(#s13)"/></g>
<circle cx="315.7" cy="450.6" r="11.5" fill="url(#gH)"/><circle cx="315.7" cy="450.6" r="11.5" fill="url(#rim)"/>
<g transform="translate(430.8 535.4) rotate(76.54)"><path d="M0.00,-8.00 L9.67,-8.00 A6.66,8.00 0 0 1 9.67,8.00 L0.00,8.00 Z" fill="url(#s35)"/></g>
<g transform="translate(296.8 474.0) rotate(-51.07)"><path d="M14.64,-8.00 L22.94,-8.00 A4.02,8.00 0 0 1 22.94,8.00 L14.64,8.00 Z" fill="url(#s8)"/></g>
<circle cx="385.2" cy="531.8" r="16.0" fill="url(#gC)"/><circle cx="385.2" cy="531.8" r="16.0" fill="url(#rim)"/>
<g transform="translate(385.2 531.8) rotate(4.51)"><path d="M13.84,-8.00 L23.27,-8.00 L23.27,8.00 L13.84,8.00 A0.35,8.00 0 0 1 13.84,-8.00 Z" fill="url(#s33)"/></g>
<g transform="translate(508.5 526.9) rotate(85.91)"><path d="M0.00,-8.00 L10.53,-8.00 A6.47,8.00 0 0 1 10.53,8.00 L0.00,8.00 Z" fill="url(#s51)"/></g>
<g transform="translate(593.3 521.5) rotate(117.76)"><path d="M0.00,-8.00 L7.51,-8.00 A7.55,8.00 0 0 1 7.51,8.00 L0.00,8.00 Z" fill="url(#s58)"/></g>
<g transform="translate(385.2 531.8) rotate(4.51)"><path d="M22.87,-8.00 L45.74,-8.00 L45.74,8.00 L22.87,8.00 A0.35,8.00 0 0 1 22.87,-8.00 Z" fill="url(#s34)"/></g>
<circle cx="430.8" cy="535.4" r="14.3" fill="url(#gN)"/><circle cx="430.8" cy="535.4" r="14.3" fill="url(#rim)"/>
<g transform="translate(227.4 438.9) rotate(-114.28)"><path d="M19.09,-8.00 L38.18,-8.00 L38.18,8.00 L19.09,8.00 A4.27,8.00 0 0 1 19.09,-8.00 Z" fill="url(#s15)"/></g>
<g transform="translate(249.2 473.4) rotate(-122.29)"><path d="M0.00,-8.00 L20.41,-8.00 A4.17,8.00 0 0 1 20.41,8.00 L0.00,8.00 Z" fill="url(#s13)"/></g>
<g transform="translate(296.8 474.0) rotate(-51.07)"><path d="M0.00,-8.00 L15.04,-8.00 A4.02,8.00 0 0 1 15.04,8.00 L0.00,8.00 Z" fill="url(#s7)"/></g>
<circle cx="508.5" cy="526.9" r="15.6" fill="url(#gC)"/><circle cx="508.5" cy="526.9" r="15.6" fill="url(#rim)"/>
<g transform="translate(366.6 507.3) rotate(52.79)"><path d="M14.98,-8.00 L21.46,-8.00 A5.93,8.00 0 0 1 21.46,8.00 L14.98,8.00 Z" fill="url(#s30)"/></g>
<g transform="translate(430.8 535.4) rotate(-27.73)"><path d="M9.90,-8.00 L20.17,-8.00 L20.17,8.00 L9.90,8.00 A4.40,8.00 0 0 1 9.90,-8.00 Z" fill="url(#s37)"/></g>
<circle cx="211.7" cy="404.1" r="14.2" fill="url(#gF)"/><circle cx="211.7" cy="404.1" r="14.2" fill="url(#rim)"/>
<g transform="translate(249.2 473.4) rotate(0.72)"><path d="M0.00,-8.00 L24.20,-8.00 L24.20,8.00 L0.00,8.00 Z" fill="url(#s1)"/></g>
<g transform="translate(249.2 473.4) rotate(0.72)"><path d="M23.80,-8.00 L47.60,-8.00 L47.60,8.00 L23.80,8.00 Z" fill="url(#s1)"/></g>
<circle cx="249.2" cy="473.4" r="16.0" fill="url(#gC)"/><circle cx="249.2" cy="473.4" r="16.0" fill="url(#rim)"/>
<circle cx="296.8" cy="474.0" r="15.8" fill="url(#gC)"/><circle cx="296.8" cy="474.0" r="15.8" fill="url(#rim)"/>
<circle cx="593.3" cy="521.5" r="15.8" fill="url(#gC)"/><circle cx="593.3" cy="521.5" r="15.8" fill="url(#rim)"/>
<g transform="translate(547.9 509.5) rotate(156.17)"><path d="M21.14,-8.00 L30.82,-8.00 A3.23,8.00 0 0 1 30.82,8.00 L21.14,8.00 Z" fill="url(#s43)"/></g>
<g transform="translate(508.5 526.9) rotate(-166.95)"><path d="M12.18,-8.00 L22.32,-8.00 L22.32,8.00 L12.18,8.00 A3.32,8.00 0 0 1 12.18,-8.00 Z" fill="url(#s44)"/></g>
<g transform="translate(593.3 521.5) rotate(-47.81)"><path d="M13.23,-8.00 L22.74,-8.00 L22.74,8.00 L13.23,8.00 A1.91,8.00 0 0 1 13.23,-8.00 Z" fill="url(#s54)"/></g>
<g transform="translate(547.9 509.5) rotate(14.81)"><path d="M23.08,-8.00 L33.98,-8.00 A2.43,8.00 0 0 1 33.98,8.00 L23.08,8.00 Z" fill="url(#s53)"/></g>
<g transform="translate(593.3 521.5) rotate(63.31)"><path d="M12.26,-8.00 L20.99,-8.00 L20.99,8.00 L12.26,8.00 A3.49,8.00 0 0 1 12.26,-8.00 Z" fill="url(#s56)"/></g>
<g transform="translate(296.8 474.0) rotate(57.07)"><path d="M11.87,-8.00 L20.36,-8.00 L20.36,8.00 L11.87,8.00 A3.93,8.00 0 0 1 11.87,-8.00 Z" fill="url(#s2)"/></g>
<g transform="translate(226.0 505.7) rotate(-54.31)"><path d="M19.48,-8.00 L27.71,-8.00 A3.94,8.00 0 0 1 27.71,8.00 L19.48,8.00 Z" fill="url(#s6)"/></g>
<g transform="translate(593.3 521.5) rotate(-47.81)"><path d="M22.34,-8.00 L44.67,-8.00 L44.67,8.00 L22.34,8.00 A1.91,8.00 0 0 1 22.34,-8.00 Z" fill="url(#s55)"/></g>
<g transform="translate(430.8 535.4) rotate(-27.73)"><path d="M19.77,-8.00 L39.54,-8.00 L39.54,8.00 L19.77,8.00 A4.40,8.00 0 0 1 19.77,-8.00 Z" fill="url(#s38)"/></g>
<g transform="translate(547.9 509.5) rotate(156.17)"><path d="M0.00,-8.00 L21.54,-8.00 A3.23,8.00 0 0 1 21.54,8.00 L0.00,8.00 Z" fill="url(#s43)"/></g>
<g transform="translate(508.5 526.9) rotate(-166.95)"><path d="M21.92,-8.00 L43.83,-8.00 L43.83,8.00 L21.92,8.00 A3.32,8.00 0 0 1 21.92,-8.00 Z" fill="url(#s44)"/></g>
<circle cx="623.3" cy="488.4" r="14.3" fill="url(#gF)"/><circle cx="623.3" cy="488.4" r="14.3" fill="url(#rim)"/>
<g transform="translate(547.9 509.5) rotate(14.81)"><path d="M0.00,-8.00 L23.48,-8.00 A2.43,8.00 0 0 1 23.48,8.00 L0.00,8.00 Z" fill="url(#s53)"/></g>
<g transform="translate(366.6 507.3) rotate(52.79)"><path d="M0.00,-8.00 L15.38,-8.00 A5.93,8.00 0 0 1 15.38,8.00 L0.00,8.00 Z" fill="url(#s29)"/></g>
<g transform="translate(593.3 521.5) rotate(63.31)"><path d="M20.59,-8.00 L41.19,-8.00 L41.19,8.00 L20.59,8.00 A3.49,8.00 0 0 1 20.59,-8.00 Z" fill="url(#s57)"/></g>
<circle cx="547.9" cy="509.5" r="16.8" fill="url(#gC)"/><circle cx="547.9" cy="509.5" r="16.8" fill="url(#rim)"/>
<circle cx="465.8" cy="517.0" r="16.3" fill="url(#gC)"/><circle cx="465.8" cy="517.0" r="16.3" fill="url(#rim)"/>
<g transform="translate(296.8 474.0) rotate(57.07)"><path d="M19.96,-8.00 L39.91,-8.00 L39.91,8.00 L19.96,8.00 A3.93,8.00 0 0 1 19.96,-8.00 Z" fill="url(#s2)"/></g>
<g transform="translate(226.0 505.7) rotate(-54.31)"><path d="M0.00,-8.00 L19.88,-8.00 A3.94,8.00 0 0 1 19.88,8.00 L0.00,8.00 Z" fill="url(#s6)"/></g>
<circle cx="611.8" cy="558.3" r="14.6" fill="url(#gF)"/><circle cx="611.8" cy="558.3" r="14.6" fill="url(#rim)"/>
<g transform="translate(226.0 505.7) rotate(-179.55)"><path d="M0.00,-8.00 L19.50,-8.00 L19.50,8.00 L0.00,8.00 Z" fill="url(#s11)"/></g>
<g transform="translate(226.0 505.7) rotate(-179.55)"><path d="M19.10,-8.00 L38.20,-8.00 L38.20,8.00 L19.10,8.00 Z" fill="url(#s12)"/></g>
<g transform="translate(318.5 507.5) rotate(-0.24)"><path d="M0.00,-8.00 L24.45,-8.00 L24.45,8.00 L0.00,8.00 Z" fill="url(#s27)"/></g>
<g transform="translate(318.5 507.5) rotate(-0.24)"><path d="M24.05,-8.00 L48.10,-8.00 L48.10,8.00 L24.05,8.00 Z" fill="url(#s28)"/></g>
<circle cx="318.5" cy="507.5" r="16.3" fill="url(#gC)"/><circle cx="318.5" cy="507.5" r="16.3" fill="url(#rim)"/>
<circle cx="226.0" cy="505.7" r="15.6" fill="url(#gC)"/><circle cx="226.0" cy="505.7" r="15.6" fill="url(#rim)"/>
<circle cx="187.8" cy="505.4" r="11.8" fill="url(#gH)"/><circle cx="187.8" cy="505.4" r="11.8" fill="url(#rim)"/>
<circle cx="366.6" cy="507.3" r="14.4" fill="url(#gN)"/><circle cx="366.6" cy="507.3" r="14.4" fill="url(#rim)"/>
<g transform="translate(546.2 480.3) rotate(86.67)"><path d="M14.22,-8.00 L20.09,-8.00 A6.28,8.00 0 0 1 20.09,8.00 L14.22,8.00 Z" fill="url(#s42)"/></g>
<g transform="translate(465.8 517.0) rotate(-94.09)"><path d="M8.70,-8.00 L15.14,-8.00 L15.14,8.00 L8.70,8.00 A6.32,8.00 0 0 1 8.70,-8.00 Z" fill="url(#s39)"/></g>
<g transform="translate(318.5 507.5) rotate(124.99)"><path d="M12.49,-8.00 L21.15,-8.00 L21.15,8.00 L12.49,8.00 A3.81,8.00 0 0 1 12.49,-8.00 Z" fill="url(#s3)"/></g>
<g transform="translate(245.5 540.3) rotate(-119.40)"><path d="M19.46,-8.00 L28.06,-8.00 A3.94,8.00 0 0 1 28.06,8.00 L19.46,8.00 Z" fill="url(#s5)"/></g>
<g transform="translate(318.5 507.5) rotate(124.99)"><path d="M20.75,-8.00 L41.50,-8.00 L41.50,8.00 L20.75,8.00 A3.81,8.00 0 0 1 20.75,-8.00 Z" fill="url(#s3)"/></g>
<g transform="translate(245.5 540.3) rotate(-119.40)"><path d="M0.00,-8.00 L19.86,-8.00 A3.94,8.00 0 0 1 19.86,8.00 L0.00,8.00 Z" fill="url(#s5)"/></g>
<circle cx="205.0" cy="611.2" r="14.8" fill="url(#gF)"/><circle cx="205.0" cy="611.2" r="14.8" fill="url(#rim)"/>
<g transform="translate(546.2 480.3) rotate(86.67)"><path d="M0.00,-8.00 L14.62,-8.00 A6.28,8.00 0 0 1 14.62,8.00 L0.00,8.00 Z" fill="url(#s42)"/></g>
<g transform="translate(294.7 541.5) rotate(-178.60)"><path d="M0.00,-8.00 L25.01,-8.00 L25.01,8.00 L0.00,8.00 Z" fill="url(#s4)"/></g>
<g transform="translate(294.7 541.5) rotate(-178.60)"><path d="M24.61,-8.00 L49.21,-8.00 L49.21,8.00 L24.61,8.00 Z" fill="url(#s4)"/></g>
<g transform="translate(465.8 517.0) rotate(-94.09)"><path d="M14.74,-8.00 L29.47,-8.00 L29.47,8.00 L14.74,8.00 A6.32,8.00 0 0 1 14.74,-8.00 Z" fill="url(#s39)"/></g>
<circle cx="294.7" cy="541.5" r="16.0" fill="url(#gC)"/><circle cx="294.7" cy="541.5" r="16.0" fill="url(#rim)"/>
<circle cx="245.5" cy="540.3" r="16.0" fill="url(#gC)"/><circle cx="245.5" cy="540.3" r="16.0" fill="url(#rim)"/>
<g transform="translate(219.0 579.2) rotate(113.63)"><path d="M17.06,-8.00 L25.31,-8.00 A5.08,8.00 0 0 1 25.31,8.00 L17.06,8.00 Z" fill="url(#s24)"/></g>
<g transform="translate(294.7 541.5) rotate(55.05)"><path d="M12.16,-8.00 L16.81,-8.00 L16.81,8.00 L12.16,8.00 A3.83,8.00 0 0 1 12.16,-8.00 Z" fill="url(#s9)"/></g>
<g transform="translate(245.5 540.3) rotate(124.26)"><path d="M12.25,-8.00 L23.93,-8.00 L23.93,8.00 L12.25,8.00 A3.74,8.00 0 0 1 12.25,-8.00 Z" fill="url(#s20)"/></g>
<circle cx="546.2" cy="480.3" r="16.3" fill="url(#gC)"/><circle cx="546.2" cy="480.3" r="16.3" fill="url(#rim)"/>
<circle cx="463.7" cy="487.6" r="16.3" fill="url(#gC)"/><circle cx="463.7" cy="487.6" r="16.3" fill="url(#rim)"/>
<g transform="translate(546.2 480.3) rotate(-24.92)"><path d="M13.23,-8.00 L18.32,-8.00 L18.32,8.00 L13.23,8.00 A2.91,8.00 0 0 1 13.23,-8.00 Z" fill="url(#s49)"/></g>
<g transform="translate(503.4 468.4) rotate(15.54)"><path d="M21.81,-8.00 L31.37,-8.00 A3.15,8.00 0 0 1 31.37,8.00 L21.81,8.00 Z" fill="url(#s41)"/></g>
<g transform="translate(463.7 487.6) rotate(-163.49)"><path d="M13.04,-8.00 L17.82,-8.00 L17.82,8.00 L13.04,8.00 A3.16,8.00 0 0 1 13.04,-8.00 Z" fill="url(#s45)"/></g>
<g transform="translate(294.7 541.5) rotate(55.05)"><path d="M16.41,-8.00 L32.82,-8.00 L32.82,8.00 L16.41,8.00 A3.83,8.00 0 0 1 16.41,-8.00 Z" fill="url(#s10)"/></g>
<g transform="translate(463.7 487.6) rotate(-25.81)"><path d="M13.25,-8.00 L22.45,-8.00 L22.45,8.00 L13.25,8.00 A2.88,8.00 0 0 1 13.25,-8.00 Z" fill="url(#s40)"/></g>
<g transform="translate(219.0 579.2) rotate(113.63)"><path d="M0.00,-8.00 L17.46,-8.00 A5.08,8.00 0 0 1 17.46,8.00 L0.00,8.00 Z" fill="url(#s23)"/></g>
<circle cx="313.5" cy="568.4" r="12.0" fill="url(#gH)"/><circle cx="313.5" cy="568.4" r="12.0" fill="url(#rim)"/>
<g transform="translate(546.2 480.3) rotate(-24.92)"><path d="M17.92,-8.00 L35.84,-8.00 L35.84,8.00 L17.92,8.00 A2.91,8.00 0 0 1 17.92,-8.00 Z" fill="url(#s50)"/></g>
<g transform="translate(245.5 540.3) rotate(124.26)"><path d="M23.53,-8.00 L47.07,-8.00 L47.07,8.00 L23.53,8.00 A3.74,8.00 0 0 1 23.53,-8.00 Z" fill="url(#s20)"/></g>
<g transform="translate(463.7 487.6) rotate(-163.49)"><path d="M17.42,-8.00 L34.84,-8.00 L34.84,8.00 L17.42,8.00 A3.16,8.00 0 0 1 17.42,-8.00 Z" fill="url(#s46)"/></g>
<circle cx="578.7" cy="465.2" r="12.3" fill="url(#gH)"/><circle cx="578.7" cy="465.2" r="12.3" fill="url(#rim)"/>
<g transform="translate(503.4 468.4) rotate(15.54)"><path d="M0.00,-8.00 L22.21,-8.00 A3.15,8.00 0 0 1 22.21,8.00 L0.00,8.00 Z" fill="url(#s41)"/></g>
<g transform="translate(463.7 487.6) rotate(-25.81)"><path d="M22.05,-8.00 L44.10,-8.00 L44.10,8.00 L22.05,8.00 A2.88,8.00 0 0 1 22.05,-8.00 Z" fill="url(#s40)"/></g>
<circle cx="430.3" cy="477.7" r="12.3" fill="url(#gH)"/><circle cx="430.3" cy="477.7" r="12.3" fill="url(#rim)"/>
<circle cx="219.0" cy="579.2" r="16.6" fill="url(#gC)"/><circle cx="219.0" cy="579.2" r="16.6" fill="url(#rim)"/>
<circle cx="503.4" cy="468.4" r="17.2" fill="url(#gC)"/><circle cx="503.4" cy="468.4" r="17.2" fill="url(#rim)"/>
<g transform="translate(219.0 579.2) rotate(-158.83)"><path d="M13.53,-8.00 L23.24,-8.00 L23.24,8.00 L13.53,8.00 A2.93,8.00 0 0 1 13.53,-8.00 Z" fill="url(#s21)"/></g>
<g transform="translate(219.0 579.2) rotate(47.15)"><path d="M10.31,-8.00 L16.43,-8.00 L16.43,8.00 L10.31,8.00 A5.64,8.00 0 0 1 10.31,-8.00 Z" fill="url(#s25)"/></g>
<g transform="translate(503.4 468.4) rotate(-95.53)"><path d="M9.92,-8.00 L12.86,-8.00 L12.86,8.00 L9.92,8.00 A6.07,8.00 0 0 1 9.92,-8.00 Z" fill="url(#s47)"/></g>
<g transform="translate(219.0 579.2) rotate(-158.83)"><path d="M22.84,-8.00 L45.68,-8.00 L45.68,8.00 L22.84,8.00 A2.93,8.00 0 0 1 22.84,-8.00 Z" fill="url(#s22)"/></g>
<circle cx="176.4" cy="562.7" r="15.1" fill="url(#gF)"/><circle cx="176.4" cy="562.7" r="15.1" fill="url(#rim)"/>
<g transform="translate(503.4 468.4) rotate(-95.53)"><path d="M12.46,-8.00 L24.92,-8.00 L24.92,8.00 L12.46,8.00 A6.07,8.00 0 0 1 12.46,-8.00 Z" fill="url(#s48)"/></g>
<g transform="translate(219.0 579.2) rotate(47.15)"><path d="M16.03,-8.00 L32.05,-8.00 L32.05,8.00 L16.03,8.00 A5.64,8.00 0 0 1 16.03,-8.00 Z" fill="url(#s26)"/></g>
<circle cx="501.0" cy="443.6" r="12.6" fill="url(#gH)"/><circle cx="501.0" cy="443.6" r="12.6" fill="url(#rim)"/>
<circle cx="240.8" cy="602.7" r="15.1" fill="url(#gF)"/><circle cx="240.8" cy="602.7" r="15.1" fill="url(#rim)"/>
</svg>

<!-- results table -->
<div class="abs" style="left:756px;top:369px;width:664px;height:32.5px;border:1px solid #000;"></div>
<div class="abs" style="left:1089px;top:369px;width:1px;height:34.5px;background:#000;"></div>
<div class="abs t bd" style="right:371.5px;top:379px;" id="rh1">Result</div>
<div class="abs t bd" style="right:39px;top:379px;" id="rh2">Value</div>

<div class="abs row" style="left:757px;top:435px;width:665px;height:78px;"></div>
<div class="abs row" style="left:757px;top:559px;width:665px;height:46px;"></div>

<div class="abs t r" style="right:369px;top:411px;" id="r1">energy</div>
<div class="abs t r" style="right:369px;top:466px;" id="r2">gradient</div>
<div class="abs t r" style="right:369px;top:528px;" id="r3">wavefunction</div>
<div class="abs t r" style="right:369px;top:574px;" id="r4">scf_dipole_moment</div>

<div class="abs t r" style="right:36.5px;top:411px;" id="v1">-91.22245653474928</div>
<div class="abs t r" style="right:36.5px;top:442px;line-height:16px;" id="v2"><span class="m" id="v2_1">[[5.93e-02 1.35e-02 1.64e-02] [5.66e-03 1.03e-02</span><br><span class="m" id="v2_2">1.06e-02] [2.45e-02 -3.37e-04 1.27e-03] ...</span><br><span class="m" id="v2_3">[-1.83e-03 3.77e-03 4.76e-03] [2.87e-03 2.71e-03</span><br><span class="m" id="v2_4">3.94e-03] [-3.70e-04 -3.57e-03 -3.94e-03]]</span></div>
<div class="abs t r" style="right:36.5px;top:520px;line-height:16px;" id="v3"><span class="m" id="v3_1">scf_eigenvalues_a=array([-8.75e-01, -8.75e-01,</span><br><span class="m" id="v3_2">-8.70e-01, ..., 6.05e-01, 6.25e-01, 7.68e-01])</span></div>
<div class="abs t r" style="right:36.5px;top:566px;line-height:16px;" id="v4"><span class="m" id="v4_1">[1.3806394158033939, 1.2940584659367897,</span><br><span class="m" id="v4_2">1.6609561391823007]</span></div>

</body></html>
